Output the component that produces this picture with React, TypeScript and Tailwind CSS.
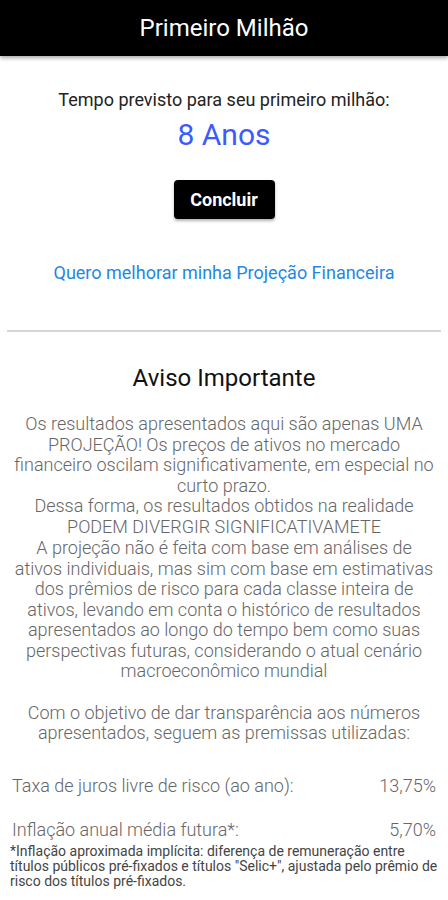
export default function App() {
  return (
    <div className="min-h-[900px] w-[448px] bg-white font-['Roboto',sans-serif]">
      <header className="flex h-[56px] items-center justify-center bg-black shadow-[0_2px_4px_rgba(0,0,0,0.35)]">
        <h1 className="text-[24px] font-normal text-white">Primeiro Milhão</h1>
      </header>

      <div className="flex flex-col items-center pt-[33px]">
        <p className="text-[18px] leading-[22px] text-[#222]">
          Tempo previsto para seu primeiro milhão:
        </p>
        <p className="mt-[6px] text-[30px] leading-[36px] text-[#3d5afe]">8 Anos</p>

        <button className="mt-[27px] h-[39px] w-[101px] rounded-[4px] bg-black text-[18px] font-bold text-white shadow-[0_2px_3px_rgba(0,0,0,0.3)]">
          Concluir
        </button>

        <a className="mt-[43px] text-[18px] leading-[22px] text-[#1e88e5]">
          Quero melhorar minha Projeção Financeira
        </a>
      </div>

      <div className="mx-[7px] mt-[46px] h-[2px] bg-[#d6d6d6]" />

      <div className="px-[10px] pt-[31px] text-center">
        <h2 className="text-[24px] leading-[30px] text-[#111]">Aviso Importante</h2>

        <div className="mx-[2px] mt-[21px] text-[18px] font-light leading-[20.5px] text-[#666]">
          <p>
            Os resultados apresentados aqui são apenas UMA PROJEÇÃO! Os preços de ativos no
            mercado financeiro oscilam significativamente, em especial no curto prazo.
          </p>
          <p>
            Dessa forma, os resultados obtidos na realidade PODEM DIVERGIR SIGNIFICATIVAMETE
          </p>
          <p className="mt-[1px]">
            A projeção não é feita com base em análises de ativos individuais, mas sim com base em
            estimativas dos prêmios de risco para cada classe inteira de ativos, levando em conta o
            histórico de resultados apresentados ao longo do tempo bem como suas perspectivas
            futuras, considerando o atual cenário macroeconômico mundial
          </p>
          <p className="mt-[21px]">
            Com o objetivo de dar transparência aos números apresentados, seguem as premissas
            utilizadas:
          </p>
        </div>

        <div className="mt-[31px] flex justify-between px-[2px] text-[18px] font-light leading-[21px] text-[#666]">
          <span>Taxa de juros livre de risco (ao ano):</span>
          <span>13,75%</span>
        </div>

        <div className="mt-[23px] flex justify-between px-[2px] text-[18px] font-light leading-[21px] text-[#666]">
          <span>Inflação anual média futura*:</span>
          <span>5,70%</span>
        </div>
        <p className="mt-[4px] text-left text-[14px] leading-[15px] text-[#444]">
          *Inflação aproximada implícita: diferença de remuneração entre títulos públicos
          pré-fixados e títulos "Selic+", ajustada pelo prêmio de risco dos títulos pré-fixados.
        </p>
      </div>
    </div>
  );
}
